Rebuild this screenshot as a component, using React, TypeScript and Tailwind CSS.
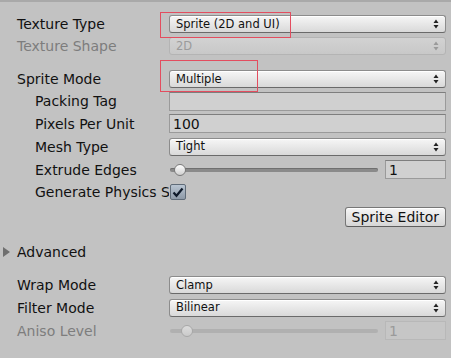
import React from "react";

const F = { fontFamily: '"DejaVu Sans", Verdana, sans-serif' };

function Arrows({ disabled }: { disabled?: boolean }) {
  const c = disabled ? "#9a9a9a" : "#222";
  return (
    <svg width="6" height="10" viewBox="0 0 6 10" className="shrink-0">
      <path d="M3 0.5 L5.5 4 L0.5 4 Z" fill={c} />
      <path d="M3 9.5 L5.5 6 L0.5 6 Z" fill={c} />
    </svg>
  );
}

function Dropdown({ text, disabled }: { text: string; disabled?: boolean }) {
  return (
    <div
      className={
        "flex h-[18px] flex-1 items-center justify-between rounded-[3px] border pl-[6px] pr-[6px] text-[11.5px] leading-none " +
        (disabled
          ? "border-[#b4b4b4] bg-gradient-to-b from-[#d2d2d2] to-[#c8c8c8] text-[#9b9b9b]"
          : "border-[#8c8c8c] border-b-[#6a6a6a] bg-gradient-to-b from-[#f6f6f6] to-[#d9d9d9] text-[#111] shadow-[inset_0_1px_0_#ffffff]")
      }
    >
      <span className="pt-[1px]">{text}</span>
      <Arrows disabled={disabled} />
    </div>
  );
}

function TextField({ text, className = "", disabled }: { text?: string; className?: string; disabled?: boolean }) {
  return (
    <div
      className={
        "flex h-[19px] items-center border px-[3px] text-[14px] leading-none " +
        (disabled
          ? "border-[#b8b8b8] bg-[#c6c6c6] text-[#9a9a9a] "
          : "border-[#9a9a9a] border-t-[#7e7e7e] bg-[#d0d0d0] text-[#111] ") +
        className
      }
    >
      {text}
    </div>
  );
}

function Slider({ disabled, value }: { disabled?: boolean; value: string }) {
  return (
    <div className="flex flex-1 items-center">
      <div className="relative mr-[7px] flex h-[14px] flex-1 items-center">
        <div
          className={
            "ml-[1px] h-[4px] w-full rounded-full " +
            (disabled ? "bg-[#b0b0b0]" : "bg-[#8a8a8a] shadow-[inset_0_1px_0_#6f6f6f]")
          }
        />
        <div
          className={
            "absolute top-[1px] h-[12px] w-[12px] rounded-full border " +
            (disabled
              ? "left-[12px] border-[#a8a8a8] bg-gradient-to-b from-[#dcdcdc] to-[#cacaca]"
              : "left-[5px] border-[#7a7a7a] bg-gradient-to-b from-[#ffffff] to-[#cfcfcf]")
          }
        />
      </div>
      <TextField text={value} disabled={disabled} className="w-[61px]" />
    </div>
  );
}

function Row({
  label,
  indent,
  disabled,
  children,
  h = "h-[22px]",
  mt = "",
}: {
  label: string;
  indent?: boolean;
  disabled?: boolean;
  children?: React.ReactNode;
  h?: string;
  mt?: string;
}) {
  return (
    <div className={"flex items-center " + h + " " + mt}>
      <div
        className={
          "w-[169px] shrink-0 overflow-hidden whitespace-nowrap text-[14px] leading-[16px] " +
          (indent ? "pl-[35px] " : "pl-[17px] ") +
          (disabled ? "text-[#7d7d7d]" : "text-[#111]")
        }
      >
        {label}
      </div>
      <div className="flex flex-1 items-center pr-[5px]">{children}</div>
    </div>
  );
}

export default function App() {
  return (
    <div className="relative h-[358px] w-[451px] overflow-hidden bg-[#c2c2c2]" style={F}>
      <div className="h-[2px] bg-[#a9a9a9]" />
      <div className="flex flex-col pt-[11px]">
        <Row label="Texture Type">
          <Dropdown text="Sprite (2D and UI)" />
        </Row>
        <Row label="Texture Shape" disabled>
          <Dropdown text="2D" disabled />
        </Row>
        <Row label="Sprite Mode" mt="mt-[11px]">
          <Dropdown text="Multiple" />
        </Row>
        <Row label="Packing Tag" indent>
          <TextField className="flex-1" />
        </Row>
        <Row label="Pixels Per Unit" indent h="h-[23px]">
          <TextField text="100" className="flex-1" />
        </Row>
        <Row label="Mesh Type" indent h="h-[23px]">
          <Dropdown text="Tight" />
        </Row>
        <Row label="Extrude Edges" indent h="h-[23px]">
          <Slider value="1" />
        </Row>
        <Row label="Generate Physics Shape" indent>
          <div className="ml-[1px] flex h-[16px] w-[16px] items-center justify-center rounded-[2px] border border-[#5f6b78] bg-gradient-to-b from-[#b9c5d2] to-[#8e9aa8]">
            <svg width="12" height="11" viewBox="0 0 12 11">
              <path d="M1.5 5.5 L4.5 8.8 L10.5 1.5" fill="none" stroke="#0f1a2a" strokeWidth="2.2" />
            </svg>
          </div>
        </Row>
        <div className="mt-[3px] flex h-[22px] items-center justify-end pr-[5px]">
          <div className="flex h-[20px] items-center rounded-[3px] border border-[#777] border-b-[#5e5e5e] bg-gradient-to-b from-[#f6f6f6] to-[#d6d6d6] px-[6px] text-[14px] leading-none text-[#111] shadow-[inset_0_1px_0_#ffffff]">
            Sprite Editor
          </div>
        </div>
        <div className="mt-[13px] flex h-[22px] items-center">
          <svg width="17" height="12" viewBox="0 0 17 12" className="shrink-0">
            <path d="M3 1 L10 6 L3 11 Z" fill="#6f6f6f" />
          </svg>
          <span className="text-[14px] leading-none text-[#111]">Advanced</span>
        </div>
        <Row label="Wrap Mode" mt="mt-[11px]">
          <Dropdown text="Clamp" />
        </Row>
        <Row label="Filter Mode" h="h-[23px]">
          <Dropdown text="Bilinear" />
        </Row>
        <Row label="Aniso Level" disabled h="h-[23px]">
          <Slider value="1" disabled />
        </Row>
      </div>
      <div className="pointer-events-none absolute left-[160px] top-[12px] h-[26px] w-[131px] border border-[#e34d5f]" />
      <div className="pointer-events-none absolute left-[160px] top-[60px] h-[32px] w-[98px] border border-[#e34d5f]" />
    </div>
  );
}
